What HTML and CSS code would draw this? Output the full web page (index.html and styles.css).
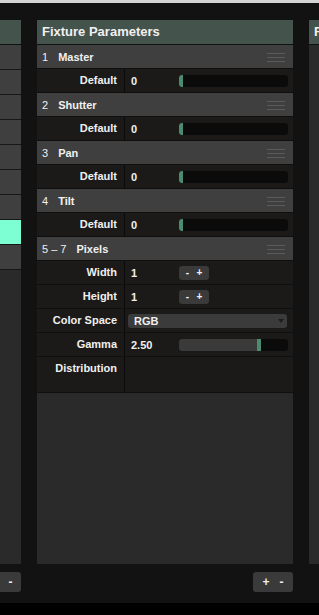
FILE: index.html
```html
<!DOCTYPE html>
<html lang="en">

<head>
    <meta charset="UTF-8">
    <meta name="viewport" content="width=device-width, initial-scale=1.0">
    <title>Fixture Parameters</title>
    <link rel="stylesheet" href="styles.css">
</head>

<body>
    <div class="top-strip"></div>

    <div class="workspace">
        <!-- fixture list (mostly off screen) -->
        <div class="panel panel-left">
            <div class="panel-header"></div>
            <div class="list-row"></div>
            <div class="list-row"></div>
            <div class="list-row"></div>
            <div class="list-row"></div>
            <div class="list-row"></div>
            <div class="list-row"></div>
            <div class="list-row"></div>
            <div class="list-row selected"></div>
            <div class="list-row"></div>
        </div>

        <div class="panel panel-main">
            <div class="panel-header">Fixture Parameters</div>

            <div class="section">
                <span class="section-num">1</span><span class="section-name">Master</span>
                <span class="grip"><i></i><i></i><i></i></span>
            </div>
            <div class="param">
                <div class="param-label">Default</div>
                <div class="param-value">
                    <span class="value-text">0</span>
                    <div class="slider"><span class="fill" style="width: 0%"></span><span class="knob"></span></div>
                </div>
            </div>

            <div class="section">
                <span class="section-num">2</span><span class="section-name">Shutter</span>
                <span class="grip"><i></i><i></i><i></i></span>
            </div>
            <div class="param">
                <div class="param-label">Default</div>
                <div class="param-value">
                    <span class="value-text">0</span>
                    <div class="slider"><span class="fill" style="width: 0%"></span><span class="knob"></span></div>
                </div>
            </div>

            <div class="section">
                <span class="section-num">3</span><span class="section-name">Pan</span>
                <span class="grip"><i></i><i></i><i></i></span>
            </div>
            <div class="param">
                <div class="param-label">Default</div>
                <div class="param-value">
                    <span class="value-text">0</span>
                    <div class="slider"><span class="fill" style="width: 0%"></span><span class="knob"></span></div>
                </div>
            </div>

            <div class="section">
                <span class="section-num">4</span><span class="section-name">Tilt</span>
                <span class="grip"><i></i><i></i><i></i></span>
            </div>
            <div class="param">
                <div class="param-label">Default</div>
                <div class="param-value">
                    <span class="value-text">0</span>
                    <div class="slider"><span class="fill" style="width: 0%"></span><span class="knob"></span></div>
                </div>
            </div>

            <div class="section">
                <span class="section-num">5 &ndash; 7</span><span class="section-name">Pixels</span>
                <span class="grip"><i></i><i></i><i></i></span>
            </div>
            <div class="param">
                <div class="param-label">Width</div>
                <div class="param-value">
                    <span class="value-text">1</span>
                    <div class="stepper"><span>-</span><span>+</span></div>
                </div>
            </div>
            <div class="param">
                <div class="param-label">Height</div>
                <div class="param-value">
                    <span class="value-text">1</span>
                    <div class="stepper"><span>-</span><span>+</span></div>
                </div>
            </div>
            <div class="param">
                <div class="param-label">Color Space</div>
                <div class="param-value">
                    <div class="select">RGB<span class="caret"></span></div>
                </div>
            </div>
            <div class="param">
                <div class="param-label">Gamma</div>
                <div class="param-value">
                    <span class="value-text">2.50</span>
                    <div class="slider"><span class="fill" style="width: 71.6%"></span><span class="knob"></span></div>
                </div>
            </div>
            <div class="param param-tall">
                <div class="param-label">Distribution</div>
                <div class="param-value"></div>
            </div>
        </div>

        <div class="panel panel-right">
            <div class="panel-header">Fixture</div>
        </div>
    </div>

    <div class="bottom-bar">
        <div class="bar-col bar-left">
            <div class="btn btn-left"><span>-</span></div>
        </div>
        <div class="bar-col bar-main">
            <div class="btn btn-pair"><span>+</span><span>-</span></div>
        </div>
    </div>

    <div class="footer"></div>
</body>

</html>
```

FILE: styles.css
```css
* {
    margin: 0;
    padding: 0;
    box-sizing: border-box;
}

body {
    font-family: 'Liberation Sans', Arial, sans-serif;
    font-size: 11px;
    font-weight: bold;
    color: #f0f0f0;
    background: #121212;
    width: 319px;
    height: 615px;
    overflow: hidden;
}

.top-strip {
    height: 3px;
    background: #d4d4d4;
}

.workspace {
    display: flex;
    gap: 16px;
    height: 561px;
    padding-top: 17px;
    background: #121212;
    overflow: hidden;
}

.panel {
    display: flex;
    flex-direction: column;
    flex-shrink: 0;
    background: #2a2a2a;
    overflow: hidden;
}

.panel-left {
    width: 21px;
}

.panel-main {
    width: 256px;
}

.panel-right {
    width: 10px;
}

.panel-header {
    height: 25px;
    line-height: 24px;
    padding-left: 5px;
    font-size: 13px;
    white-space: nowrap;
    background: #45534d;
    border-bottom: 1px solid #111;
}

.list-row {
    height: 25px;
    background: #3f3f3f;
    border-bottom: 1px solid #171717;
}

.list-row.selected {
    background: #7effd3;
}

.section {
    display: flex;
    align-items: center;
    height: 24px;
    padding-left: 5px;
    background: #3f3f3f;
    border-bottom: 1px solid #0f0f0f;
}

.section-num {
    font-weight: normal;
    margin-right: 10px;
}

.grip {
    margin-left: auto;
    margin-right: 8px;
    width: 18px;
    display: flex;
    flex-direction: column;
    gap: 3px;
    padding-top: 1px;
}

.grip i {
    display: block;
    height: 1px;
    background: #5a5a5a;
}

.param {
    display: flex;
    height: 24px;
    background: #1b1a18;
    border-bottom: 1px solid #0f0f0f;
}

.param-tall {
    height: 36px;
}

.param-label {
    width: 88px;
    flex-shrink: 0;
    padding-right: 7px;
    line-height: 23px;
    text-align: right;
    border-right: 1px solid #0a0a0a;
}

.param-value {
    flex: 1;
    display: flex;
    align-items: center;
    height: 23px;
    padding: 0 5px 0 6px;
}

.value-text {
    width: 48px;
    flex-shrink: 0;
}

.slider {
    flex: 1;
    height: 12px;
    display: flex;
    background: #0b0b0b;
    border-radius: 3px;
    overflow: hidden;
}

.slider .fill {
    background: #3a3a3a;
}

.slider .knob {
    width: 4px;
    background: #4b8b70;
}

.stepper {
    width: 30px;
    height: 14px;
    display: flex;
    align-items: center;
    justify-content: space-around;
    padding: 0 3px;
    font-size: 10px;
    background: #3a3a3a;
    border-radius: 3px;
}

.select {
    flex: 1;
    height: 14px;
    margin: 0 1px 0 -3px;
    padding-left: 6px;
    display: flex;
    align-items: center;
    background: #3b3b3b;
    border-radius: 3px;
}

.caret {
    margin-left: auto;
    margin-right: 3px;
    width: 0;
    height: 0;
    border-left: 3px solid transparent;
    border-right: 3px solid transparent;
    border-top: 4px solid #1e1e1e;
}

.bottom-bar {
    display: flex;
    gap: 16px;
    height: 39px;
    padding-top: 8px;
    background: #121212;
}

.bar-col {
    flex-shrink: 0;
}

.bar-left {
    width: 21px;
}

.bar-main {
    width: 256px;
    display: flex;
    justify-content: flex-end;
}

.btn {
    height: 20px;
    display: flex;
    align-items: center;
    justify-content: center;
    font-size: 12px;
    background: #3a3a3a;
    border-radius: 3px;
}

.btn-left {
    width: 21px;
    border-radius: 0 3px 3px 0;
}

.btn-pair {
    width: 40px;
    gap: 10px;
}

.footer {
    height: 12px;
    background: #000;
}
```
